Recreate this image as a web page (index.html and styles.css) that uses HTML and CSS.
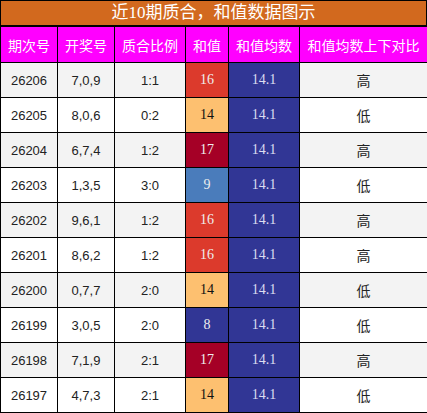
FILE: index.html
```html
<!DOCTYPE html>
<html lang="zh">
<head>
    <meta charset="UTF-8">
    <title>近10期质合，和值数据图示</title>
    <link rel="stylesheet" href="styles.css">
</head>
<body>
    <div class="title">近10期质合，和值数据图示</div>
    <table class="data">
        <colgroup>
            <col class="c-issue"><col class="c-draw"><col class="c-ratio"><col class="c-sum"><col class="c-avg"><col class="c-cmp">
        </colgroup>
        <thead>
            <tr><th>期次号</th><th>开奖号</th><th>质合比例</th><th>和值</th><th>和值均数</th><th>和值均数上下对比</th></tr>
        </thead>
        <tbody>
            <tr><td>26206</td><td>7,0,9</td><td>1:1</td><td class="sum s16">16</td><td class="avg">14.1</td><td class="cmp">高</td></tr>
            <tr><td>26205</td><td>8,0,6</td><td>0:2</td><td class="sum s14">14</td><td class="avg">14.1</td><td class="cmp">低</td></tr>
            <tr><td>26204</td><td>6,7,4</td><td>1:2</td><td class="sum s17">17</td><td class="avg">14.1</td><td class="cmp">高</td></tr>
            <tr><td>26203</td><td>1,3,5</td><td>3:0</td><td class="sum s9">9</td><td class="avg">14.1</td><td class="cmp">低</td></tr>
            <tr><td>26202</td><td>9,6,1</td><td>1:2</td><td class="sum s16">16</td><td class="avg">14.1</td><td class="cmp">高</td></tr>
            <tr><td>26201</td><td>8,6,2</td><td>1:2</td><td class="sum s16">16</td><td class="avg">14.1</td><td class="cmp">高</td></tr>
            <tr><td>26200</td><td>0,7,7</td><td>2:0</td><td class="sum s14">14</td><td class="avg">14.1</td><td class="cmp">低</td></tr>
            <tr><td>26199</td><td>3,0,5</td><td>2:0</td><td class="sum s8">8</td><td class="avg">14.1</td><td class="cmp">低</td></tr>
            <tr><td>26198</td><td>7,1,9</td><td>2:1</td><td class="sum s17">17</td><td class="avg">14.1</td><td class="cmp">高</td></tr>
            <tr><td>26197</td><td>4,7,3</td><td>2:1</td><td class="sum s14">14</td><td class="avg">14.1</td><td class="cmp">低</td></tr>
        </tbody>
    </table>
</body>
</html>
```
FILE: styles.css
```css
body { margin: 0; width: 427px; font-family: "Liberation Sans", "Noto Sans CJK SC", sans-serif; background: #fff; }
.title { height: 24px; line-height: 24px; border: 1px solid #000; background-color: #d2691e; color: #fff; text-align: center; font-size: 17px; font-family: "Liberation Serif", "Noto Sans CJK SC", serif; }
.data { width: 427px; border-collapse: collapse; table-layout: fixed; border: 1px solid #000; }
.data th, .data td { border: 1px solid #000; padding: 0; text-align: center; }
.c-issue { width: 57px; }
.c-draw { width: 57px; }
.c-ratio { width: 71px; }
.c-sum { width: 43px; }
.c-avg { width: 71px; }
.c-cmp { width: 128px; }
.data th { height: 35px; background-color: #ff00ff; color: #fff; font-weight: normal; font-size: 14px; font-family: "Noto Sans CJK SC", sans-serif; }
.data td { height: 34px; font-size: 13px; color: #222; }
.data td.cmp { font-size: 14px; font-family: "Noto Sans CJK SC", sans-serif; }
.data tbody tr:nth-child(odd) { background-color: #f3f3f3; }
.data td.sum, .data td.avg { font-family: "Liberation Serif", serif; font-size: 14px; color: #eee; }
.data td.avg { background-color: #313695; color: #dcdcf0; }
.data td.s17 { background-color: #a50026; }
.data td.s16 { background-color: #dc3a2c; }
.data td.s14 { background-color: #fdc070; color: #111; }
.data td.s9 { background-color: #4a7cbb; }
.data td.s8 { background-color: #313695; }
```
